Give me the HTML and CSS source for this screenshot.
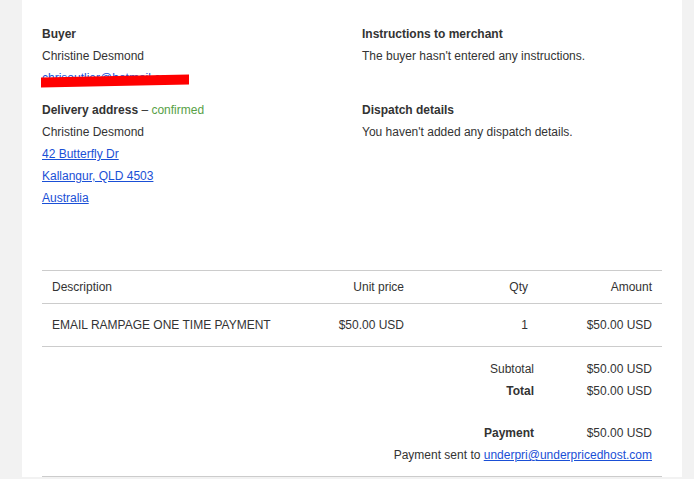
FILE: index.html
```html
<!DOCTYPE html>
<html lang="en">
<head>
    <meta charset="UTF-8">
    <title>Transaction details</title>
    <link rel="stylesheet" href="styles.css">
</head>
<body>
    <div class="panel">
        <!-- Buyer / delivery info -->
        <div class="info">
            <div class="info-col">
                <div class="block">
                    <div class="title">Buyer</div>
                    <div class="line">Christine Desmond</div>
                    <div class="line"><a href="#" class="hidden-mail">chrisoutlier@hotmail.com</a></div>
                </div>
                <div class="block">
                    <div class="title">Delivery address <span class="dash">&ndash;</span> <span class="confirmed">confirmed</span></div>
                    <div class="line">Christine Desmond</div>
                    <div class="line"><a href="#">42 Butterfly Dr</a></div>
                    <div class="line"><a href="#">Kallangur, QLD 4503</a></div>
                    <div class="line"><a href="#">Australia</a></div>
                </div>
            </div>
            <div class="info-col">
                <div class="block">
                    <div class="title">Instructions to merchant</div>
                    <div class="line">The buyer hasn't entered any instructions.</div>
                </div>
                <div class="block spaced">
                    <div class="title">Dispatch details</div>
                    <div class="line">You haven't added any dispatch details.</div>
                </div>
            </div>
        </div>

        <!-- Items -->
        <table class="items">
            <thead>
                <tr>
                    <th class="desc">Description</th>
                    <th class="num">Unit price</th>
                    <th class="num">Qty</th>
                    <th class="num">Amount</th>
                </tr>
            </thead>
            <tbody>
                <tr>
                    <td class="desc">EMAIL RAMPAGE ONE TIME PAYMENT</td>
                    <td class="num">$50.00 USD</td>
                    <td class="num">1</td>
                    <td class="num">$50.00 USD</td>
                </tr>
            </tbody>
        </table>

        <!-- Totals -->
        <div class="totals">
            <div class="label">Subtotal</div><div class="value">$50.00 USD</div>
            <div class="label bold">Total</div><div class="value">$50.00 USD</div>
            <div class="label bold gap">Payment</div><div class="value gap">$50.00 USD</div>
        </div>
        <div class="sent">Payment sent to <a href="#">underpri@underpricedhost.com</a></div>
    </div>
</body>
</html>
```

FILE: styles.css
```css
body {
    margin: 0;
    background-color: #f2f2f2;
    font-family: 'Liberation Sans', Arial, sans-serif;
    font-size: 12px;
    color: #333;
}

/* Белая панель */
.panel {
    width: 620px;
    margin-left: 22px;
    padding: 23px 20px 0;
    background-color: #fff;
}

a {
    color: #1a4fd6;
    text-decoration: underline;
}

.info {
    display: grid;
    grid-template-columns: 320px 1fr;
}

.block {
    margin-bottom: 10px;
}

.block.spaced {
    margin-top: 32px;
}

.title {
    font-weight: bold;
    line-height: 22px;
}

.dash {
    font-weight: normal;
}

.confirmed {
    font-weight: normal;
    color: #57a046;
}

.line {
    line-height: 22px;
}

/* Замазанный email */
.hidden-mail {
    position: relative;
}

.hidden-mail::after {
    content: "";
    position: absolute;
    left: -1px;
    right: -12px;
    top: 5px;
    height: 10px;
    background-color: #ff0000;
    transform: skewY(-1.2deg);
}

/* Таблица товаров */
.items {
    width: 100%;
    border-collapse: collapse;
    margin-top: 51px;
}

.items th,
.items td {
    font-weight: normal;
    padding: 0 10px;
}

.items th {
    height: 32px;
    border-top: 1px solid #ccc;
    border-bottom: 1px solid #ccc;
}

.items td {
    height: 42px;
    border-bottom: 1px solid #ccc;
}

.items .desc {
    text-align: left;
    width: 228px;
}

.items .num {
    text-align: right;
    width: 104px;
}

.totals {
    display: grid;
    grid-template-columns: 1fr 118px;
    margin-top: 11px;
    line-height: 22px;
}

.totals .label {
    text-align: right;
    padding-right: 10px;
}

.totals .value {
    text-align: right;
    padding-right: 10px;
}

.bold {
    font-weight: bold;
}

.gap {
    margin-top: 20px;
}

.sent {
    text-align: right;
    padding-right: 10px;
    line-height: 22px;
    padding-bottom: 10px;
    border-bottom: 1px solid #ccc;
}
```
